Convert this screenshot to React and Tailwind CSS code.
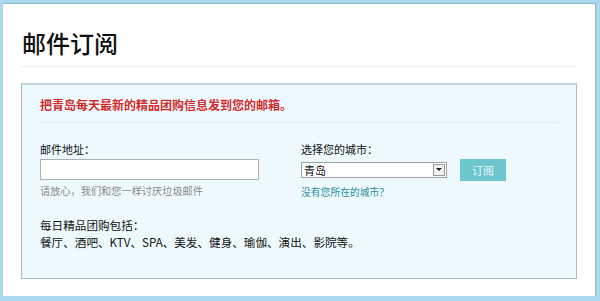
import React from "react";

const font = { fontFamily: "'Noto Sans CJK SC', 'Liberation Sans', sans-serif" };

export default function App() {
  return (
    <div className="w-[600px] h-[301px] bg-[#a9d8ef] pt-[3px] pl-[3px] pr-[4px] pb-[5px]" style={font}>
      <div className="h-full bg-white border-t border-r border-[#8db3c6] px-[18px] pt-[21px]">
        {/* Title */}
        <h1 className="text-[24px] leading-[36px] font-medium text-[#111] pl-[1px]">邮件订阅</h1>
        <div className="mt-[5px] h-px bg-[#eceef0]" />

        {/* Subscribe box */}
        <div className="mt-[16px] h-[196px] bg-[#eef9fe] border border-[#a7bcc8] border-t-[#c3d4dd] border-t-2 px-[18px] pt-[11px]">
          <p className="text-[12px] leading-[18px] font-bold text-[#d22c2c]">把青岛每天最新的精品团购信息发到您的邮箱。</p>
          <div className="mt-[8px] h-px bg-[#e1eef4]" />

          <div className="flex mt-[18px]">
            <div className="w-[261px]">
              <label className="block text-[11px] leading-[16px] text-[#111]">邮件地址：</label>
              <input
                type="text"
                className="mt-[2px] block w-[219px] h-[21px] bg-white border border-[#a8b0bc] outline-none"
              />
              <p className="mt-[3px] text-[10.2px] leading-[16px] text-[#8a8a8a]">请放心，我们和您一样讨厌垃圾邮件</p>
            </div>

            <div>
              <label className="block text-[11px] leading-[16px] text-[#111]">选择您的城市：</label>
              <div className="mt-[2px] flex items-center gap-[13px]">
                <div className="w-[146px] h-[16px] bg-white border border-[#9aa3ad] flex items-center justify-between">
                  <span className="text-[11px] leading-[14px] text-[#111] pl-[2px]">青岛</span>
                  <span className="w-[12px] h-[12px] mr-[1px] bg-[#f0f0f0] border border-[#9a9a9a] flex items-center justify-center">
                    <svg width="6" height="4" viewBox="0 0 6 4">
                      <path d="M0 0h6L3 3z" fill="#222" />
                    </svg>
                  </span>
                </div>
                <button className="w-[46px] h-[22px] bg-[#6cc6cb] text-[11px] leading-[22px] text-[#e8fbfb]">订阅</button>
              </div>
              <a className="block mt-[3px] text-[9.8px] leading-[16px] text-[#2b8f9c]">没有您所在的城市？</a>
            </div>
          </div>

          <div className="mt-[17px] text-[11.6px] leading-[17px] text-[#111]">
            <p>每日精品团购包括：</p>
            <p>餐厅、酒吧、KTV、SPA、美发、健身、瑜伽、演出、影院等。</p>
          </div>
        </div>
      </div>
    </div>
  );
}
